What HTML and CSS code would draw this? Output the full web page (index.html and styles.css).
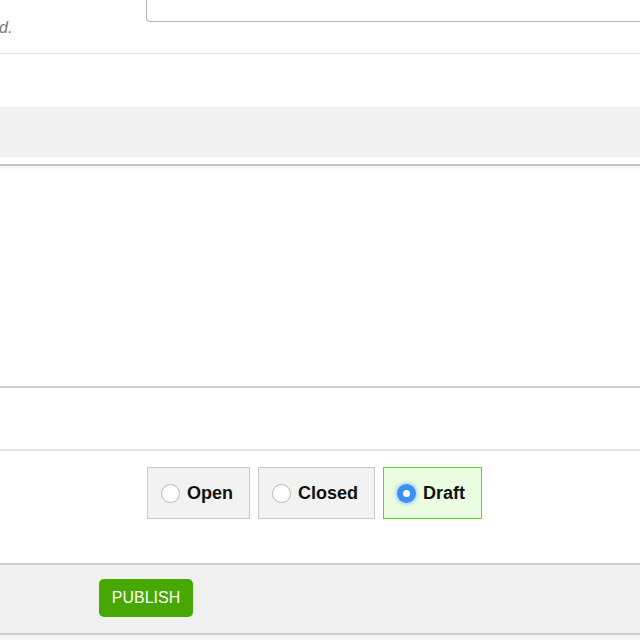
FILE: index.html
```html
<!DOCTYPE html>
<html>
<head>
<meta charset="utf-8">
<link rel="stylesheet" href="styles.css">
</head>
<body>
<div class="page">
  <div class="field-row">
    <div class="field-help">d.</div>
    <div class="field-input"><div class="textarea"></div></div>
  </div>
  <div class="spacer-a"></div>
  <div class="band-top"></div>
  <div class="gap-a"></div>
  <div class="panel"></div>
  <div class="blank-row"></div>
  <div class="status-row">
    <label class="choice"><span class="radio"></span><span class="choice-label">Open</span></label>
    <label class="choice"><span class="radio"></span><span class="choice-label">Closed</span></label>
    <label class="choice selected"><span class="radio checked"></span><span class="choice-label">Draft</span></label>
  </div>
  <div class="footer">
    <button class="publish">PUBLISH</button>
  </div>
  <div class="below"></div>
</div>
</body>
</html>
```
FILE: styles.css
```css
html, body {
  margin: 0;
  padding: 0;
  background: #fff;
  overflow: hidden;
}
.page {
  width: 640px;
  height: 640px;
  font-family: "Liberation Sans", Arial, sans-serif;
  overflow: hidden;
}
.field-row {
  display: flex;
  height: 53px;
  border-bottom: 1px solid #e3e3e3;
}
.field-help {
  width: 147px;
  flex-shrink: 0;
  font-style: italic;
  font-size: 16px;
  color: #777;
  padding-top: 19px;
  margin-left: -1px;
}
.field-input {
  flex: 1;
  min-width: 0;
}
.textarea {
  height: 21px;
  width: 520px;
  border: 1px solid #b5b5b5;
  border-top: none;
  border-radius: 0 0 4px 4px;
}
.spacer-a {
  height: 53px;
}
.band-top {
  height: 50px;
  background: #f0f0f0;
}
.gap-a {
  height: 7px;
}
.panel {
  height: 220px;
  border-top: 2px solid #c4c4c4;
  border-bottom: 2px solid #d0d0d0;
  box-shadow: inset 0 4px 4px -3px rgba(0,0,0,0.08);
}
.blank-row {
  height: 61px;
  border-bottom: 2px solid #e6e6e6;
}
.status-row {
  display: flex;
  gap: 8px;
  padding: 16px 0 0 147px;
  height: 112px;
  box-sizing: border-box;
}
.choice {
  display: flex;
  align-items: center;
  height: 52px;
  box-sizing: border-box;
  padding: 0 16px 0 13px;
  background: #f2f2f2;
  border: 1px solid #c9c9c9;
  font-weight: bold;
  font-size: 18px;
  color: #111;
}
.choice.selected {
  background: #ebfde0;
  border-color: #5ed61a;
}
.radio {
  width: 19px;
  height: 19px;
  border-radius: 50%;
  border: 1px solid #b8b8b8;
  background: #fff;
  margin-right: 7px;
  box-sizing: border-box;
}
.radio.checked {
  background: #3b8ff5;
  border: 6px solid #3b8ff5;
  position: relative;
  box-shadow: 0 0 3px 2px rgba(120,180,255,0.45);
}
.radio.checked::after {
  content: "";
  position: absolute;
  left: 0;
  top: 0;
  width: 7px;
  height: 7px;
  border-radius: 50%;
  background: #fff;
}
.choice-label {
  line-height: 21px;
}
.footer {
  height: 54px;
  background: #f0f0f0;
  border-top: 2px solid #cfcfcf;
  border-bottom: 2px solid #cfcfcf;
  padding: 14px 0 0 99px;
}
.publish {
  display: block;
  width: 94px;
  height: 38px;
  background: #47a803;
  color: #fff;
  border: none;
  border-radius: 5px;
  font-family: "Liberation Sans", Arial, sans-serif;
  font-size: 16px;
  padding: 0;
}
.below {
  height: 10px;
  background: #f5f5f5;
}
```
